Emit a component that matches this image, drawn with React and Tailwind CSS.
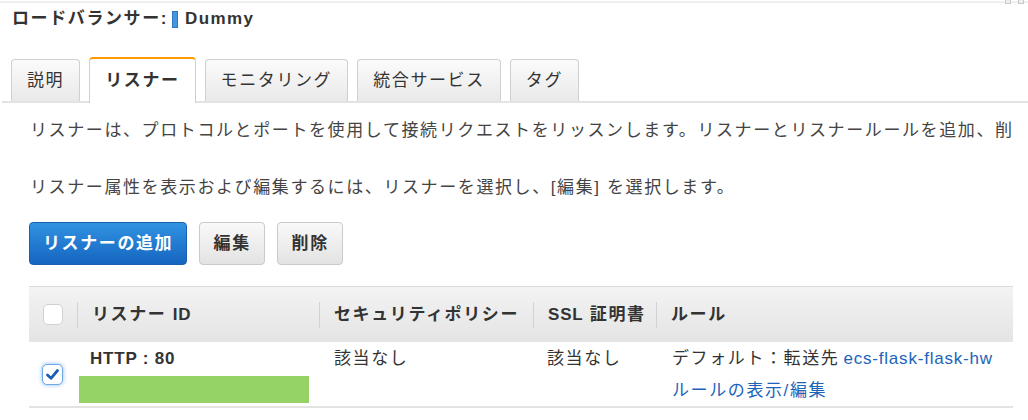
import React from "react";

const tabs = ["説明", "リスナー", "モニタリング", "統合サービス", "タグ"];

const CheckOn = () => (
    <div className="w-[21px] h-[21px] rounded-[5px] border border-[#6ea8e2] bg-white shadow-[0_0_4px_rgba(60,140,230,0.6)] flex items-center justify-center">
        <svg width="15" height="15" viewBox="0 0 15 15">
            <path d="M2.5 8 L6 11.3 L12.5 3.5" fill="none" stroke="#1b5cb3" strokeWidth="2.8" strokeLinecap="round" strokeLinejoin="round" />
        </svg>
    </div>
);

const HeadCell = ({ children, className }) => (
    <div className={`flex items-center ${className}`}>
        <div className="w-px h-[26px] bg-[#d2d2d2]"></div>
        <span className="pl-[14px] font-bold text-[#333]">{children}</span>
    </div>
);

const App = () => {
    return (
        <div className="relative w-[1028px] h-[420px] overflow-hidden bg-white text-[17px] tracking-[1.6px] text-[#444] font-['Liberation_Sans','Noto_Sans_CJK_JP',sans-serif]">
            {/* cut off icons at top right */}
            <div className="absolute top-0 right-[17px] w-[6px] h-[4px] border border-t-0 border-[#c8c8c8] bg-[#eee]"></div>
            <div className="absolute top-0 right-[4px] w-[6px] h-[4px] border border-t-0 border-[#c8c8c8] bg-[#eee]"></div>

            <div className="mt-[1px] border-t-2 border-[#efefef] pt-[4px] pl-[12px] flex items-center h-[30px] font-bold text-[#333] leading-[24px]">
                <span>ロードバランサー:</span>
                <span className="ml-[4px] mr-[7px] w-[6px] h-[17px] bg-[#4495dc] border border-[#2c78c2]"></span>
                <span className="tracking-[1.4px]">Dummy</span>
            </div>

            {/* tabs */}
            <div className="mt-[26px] h-[46px] flex items-end gap-[9px] pl-[9px] ml-[2px] border-b-2 border-[#e3e3e3]">
                {tabs.map((t, i) =>
                    i === 1 ? (
                        <div key={t} className="h-[46px] -mb-[2px] px-[15px] flex items-center justify-center bg-white border border-b-0 border-[#cfcfcf] border-t-2 border-t-[#ff9900] rounded-t-[4px] font-bold text-[#333]">
                            {t}
                        </div>
                    ) : (
                        <div key={t} className="h-[42px] px-[15px] flex items-center justify-center bg-linear-to-b from-[#fbfbfb] to-[#e9e9e9] border border-b-0 border-[#d0d0d0] rounded-t-[4px] text-[#333]">
                            {t}
                        </div>
                    )
                )}
            </div>

            <div className="pl-[30px]">
                <p className="mt-[16px] leading-[24px] whitespace-nowrap">
                    リスナーは、プロトコルとポートを使用して接続リクエストをリッスンします。リスナーとリスナールールを追加、削
                </p>
                <p className="mt-[33px] leading-[24px] whitespace-nowrap">
                    リスナー属性を表示および編集するには、リスナーを選択し、[編集] を選択します。
                </p>
            </div>

            <div className="pl-[29px] mt-[22px] flex gap-[12px]">
                <button className="h-[43px] px-[13px] rounded-[4px] border border-[#1a5fae] bg-linear-to-b from-[#3292e2] to-[#1565bf] text-white font-bold">
                    リスナーの追加
                </button>
                <button className="h-[43px] w-[66px] rounded-[4px] border border-[#cacaca] bg-linear-to-b from-[#f9f9f9] to-[#e3e3e3] text-[#333] font-bold">
                    編集
                </button>
                <button className="h-[43px] w-[66px] rounded-[4px] border border-[#cacaca] bg-linear-to-b from-[#f9f9f9] to-[#e3e3e3] text-[#333] font-bold">
                    削除
                </button>
            </div>

            {/* table */}
            <div className="ml-[29px] mt-[21px] w-[984px]">
                <div className="h-[56px] flex border-t border-[#dcdcdc] bg-linear-to-b from-[#f3f3f3] to-[#e4e4e4]">
                    <div className="w-[48px] flex items-center pl-[14px]">
                        <div className="w-[20px] h-[21px] rounded-[5px] border border-[#d0d0d0] bg-white"></div>
                    </div>
                    <HeadCell className="w-[242px]">リスナー <span className="tracking-[0.8px]">ID</span></HeadCell>
                    <HeadCell className="w-[214px]">セキュリティポリシー</HeadCell>
                    <HeadCell className="w-[123px]"><span className="tracking-[0.8px]">SSL</span> 証明書</HeadCell>
                    <HeadCell className="flex-1">ルール</HeadCell>
                </div>

                <div className="h-[66px] flex border-b-2 border-[#e3e3e3] leading-[32px] text-[#333]">
                    <div className="w-[48px] flex items-center pl-[13px] pt-[1px]">
                        <CheckOn />
                    </div>
                    <div className="w-[242px] pt-[1px]">
                        <div className="pl-[13px] font-bold tracking-[0.8px]">HTTP : 80</div>
                        <div className="ml-[2px] mt-[1px] w-[230px] h-[27px] bg-[#95d366]"></div>
                    </div>
                    <div className="w-[214px] pt-[1px] pl-[15px]">該当なし</div>
                    <div className="w-[123px] pt-[1px] pl-[14px]">該当なし</div>
                    <div className="flex-1 pt-[1px] pl-[16px] whitespace-nowrap">
                        <div>
                            デフォルト：転送先
                            <span className="ml-[4px] text-[#1b64b9] tracking-[0.8px]">ecs-flask-flask-hw</span>
                        </div>
                        <div className="text-[#1b64b9]">ルールの表示/編集</div>
                    </div>
                </div>
            </div>
        </div>
    );
};

export default App;
